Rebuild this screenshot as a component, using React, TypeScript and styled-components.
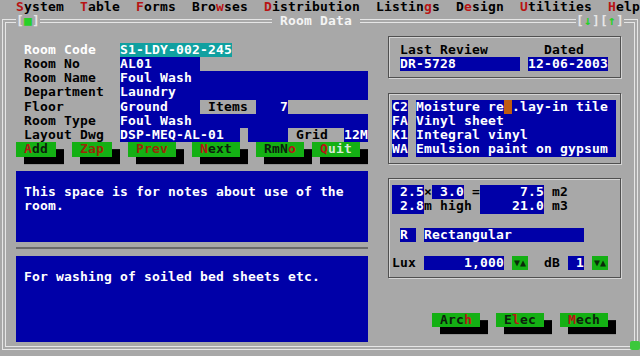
import React from 'react';
import styled, { createGlobalStyle } from 'styled-components';

// text-mode screen: 80 x 25 cells
const CW = 8;
const RH = 356 / 25;

const GRAY = '#a8a8a8';
const BLUE = '#0000a8';
const CYAN = '#10a0a0';
const GREEN = '#14b014';
const RED = '#b81414';

const GlobalStyle = createGlobalStyle`
  html, body {
    margin: 0;
    padding: 0;
    background: ${GRAY};
  }
`;

const Screen = styled.div`
  position: relative;
  width: 640px;
  height: 356px;
  overflow: hidden;
  background: ${GRAY};
  color: #000;
  font-family: "DejaVu Sans Mono", "Liberation Mono", monospace;
  font-weight: bold;
  font-size: 13px;
  letter-spacing: 0.17px;
  line-height: ${RH}px;
  white-space: pre;
`;

const MenuBar = styled.div`
  display: flex;
  gap: 16px;
  height: ${RH}px;
  padding-left: 16px;
`;

const Hot = styled.span<{ $color?: string }>`
  color: ${(p) => p.$color ?? RED};
`;

const Window = styled.div`
  position: relative;
  box-sizing: border-box;
  height: 331px;
  margin: 4.76px 2px 0;
  border: 4px double #e6e6e6;
`;

const TitleBar = styled.div`
  display: flex;
  height: ${RH}px;
  margin-top: -8.76px;
  padding: 0 10px;
`;

const TitleGlyphs = styled.span`
  background: ${GRAY};
  color: #e6e6e6;
`;

const TitleText = styled.span`
  margin-left: 232px;
  background: ${GRAY};
  color: #f4f4f4;
`;

const Spacer = styled.span`
  flex: 1;
`;

const GreenGlyph = styled.span`
  color: #28d028;
`;

const Grip = styled.div`
  position: absolute;
  right: -6px;
  bottom: -4px;
  width: 10px;
  height: 9px;
  border-radius: 2px;
  background: #3cc83c;
`;

const Body = styled.div`
  display: flex;
  gap: 16px;
  padding-left: 10px;
`;

const LeftCol = styled.div`
  display: flex;
  flex-direction: column;
  width: 352px;
  padding-top: ${RH}px;
`;

const RightCol = styled.div`
  display: flex;
  flex-direction: column;
  width: 240px;
`;

const Row = styled.div`
  display: flex;
  height: ${RH}px;
`;

const Label = styled.span<{ $active?: boolean }>`
  box-sizing: border-box;
  width: 104px;
  padding-left: 8px;
  color: ${(p) => (p.$active ? '#ffffff' : '#000000')};
`;

const Field = styled.span<{ $w: number; $bg?: string }>`
  flex-shrink: 0;
  width: ${(p) => p.$w * CW}px;
  overflow: hidden;
  background: ${(p) => p.$bg ?? BLUE};
  color: #ffffff;
`;

const Gap = styled.span<{ $w: number }>`
  flex-shrink: 0;
  width: ${(p) => p.$w * CW}px;
`;

const Txt = styled.span`
  color: #000;
`;

const Cursor = styled.span`
  background: #c05c10;
`;

const Spinner = styled.span`
  width: 16px;
  background: ${GREEN};
  color: #0a2a0a;
  font-size: 10px;
  letter-spacing: 0;
  text-align: center;
`;

const ButtonRow = styled.div<{ $top?: number }>`
  display: flex;
  height: ${RH}px;
  margin-top: ${(p) => (p.$top ?? 0) * RH}px;
`;

const Button = styled.span<{ $at: number; $ink?: string }>`
  margin-left: ${(p) => p.$at * CW}px;
  background: ${GREEN};
  color: ${(p) => p.$ink ?? '#0c200c'};
  box-shadow: 8px ${RH / 2}px 0 #000;
`;

const Notes = styled.div<{ $rows: number; $top?: number }>`
  box-sizing: border-box;
  height: ${(p) => p.$rows * RH}px;
  margin-top: ${(p) => (p.$top ?? 0) * RH}px;
  padding: ${RH}px 8px 0;
  background: ${BLUE};
  color: #ffffff;
`;

const Separator = styled.div`
  height: ${RH}px;
  &::after {
    content: '';
    display: block;
    height: 2px;
    margin-top: 5px;
    background: #6a6a6a;
  }
`;

const Box = styled.div<{ $rows: number }>`
  box-sizing: border-box;
  width: 233px;
  height: ${(p) => p.$rows * RH}px;
  margin: ${RH / 2}px 0 ${RH / 2}px 4px;
  padding: ${RH / 2 - 1}px 0 0 3px;
  border: 1px solid #505050;
  box-shadow: inset 1px 1px 0 #d4d4d4, 1px 1px 0 #d4d4d4;
`;

const hot = (text: string, i: number, color?: string) => (
  <>
    {text.slice(0, i)}
    <Hot $color={color}>{text[i]}</Hot>
    {text.slice(i + 1)}
  </>
);

const menu: [string, number][] = [
  ['System', 0],
  ['Table', 0],
  ['Forms', 0],
  ['Browses', 3],
  ['Distribution', 0],
  ['Listings', 6],
  ['Design', 1],
  ['Utilities', 0],
  ['Help', 0],
];

const materials: [string, React.ReactNode][] = [
  ['C2', <>Moisture re<Cursor> </Cursor>.lay-in tile</>],
  ['FA', 'Vinyl sheet'],
  ['K1', 'Integral vinyl'],
  ['WA', 'Emulsion paint on gypsum'],
];

export default function App() {
  return (
    <Screen>
      <GlobalStyle />
      <MenuBar>
        {menu.map(([m, i]) => (
          <span key={m}>{hot(m, i)}</span>
        ))}
      </MenuBar>

      <Window>
        <TitleBar>
          <TitleGlyphs>[<GreenGlyph>■</GreenGlyph>]</TitleGlyphs>
          <TitleText> Room Data </TitleText>
          <Spacer />
          <TitleGlyphs>
            [<GreenGlyph>↓</GreenGlyph>][<GreenGlyph>↑</GreenGlyph>]
          </TitleGlyphs>
        </TitleBar>

        <Body>
          <LeftCol>
            <Row>
              <Label $active>Room Code</Label>
              <Field $w={14} $bg={CYAN}>S1-LDY-002-245</Field>
            </Row>
            <Row>
              <Label>Room No</Label>
              <Field $w={10}>AL01</Field>
            </Row>
            <Row>
              <Label>Room Name</Label>
              <Field $w={31}>Foul Wash</Field>
            </Row>
            <Row>
              <Label>Department</Label>
              <Field $w={31}>Laundry</Field>
            </Row>
            <Row>
              <Label>Floor</Label>
              <Field $w={10}>Ground</Field>
              <Gap $w={7}> Items</Gap>
              <Field $w={4}>   7</Field>
            </Row>
            <Row>
              <Label>Room Type</Label>
              <Field $w={31}>Foul Wash</Field>
            </Row>
            <Row>
              <Label>Layout Dwg</Label>
              <Field $w={15}>DSP-MEQ-AL-01</Field>
              <Gap $w={1} />
              <Field $w={5} />
              <Gap $w={7}> Grid</Gap>
              <Field $w={3}>12M</Field>
            </Row>

            <ButtonRow>
              <Button $at={0}> {hot('Add', 0)} </Button>
              <Button $at={2} $ink="#9a2a08"> Zap </Button>
              <Button $at={2} $ink="#9a2a08"> Prev </Button>
              <Button $at={2}> {hot('Next', 0)} </Button>
              <Button $at={2}> {hot('RmNo', 3)} </Button>
              <Button $at={1} $ink="#d8e8d8"> {hot('Quit', 0)} </Button>
            </ButtonRow>

            <Notes $rows={5} $top={1}>
              {'This space is for notes about use of the\nroom.'}
            </Notes>
            <Separator />
            <Notes $rows={6}>For washing of soiled bed sheets etc.</Notes>
          </LeftCol>

          <RightCol>
            <Box $rows={3}>
              <Row>
                <Gap $w={1} />
                <Txt>Last Review</Txt>
                <Gap $w={7} />
                <Txt>Dated</Txt>
              </Row>
              <Row>
                <Gap $w={1} />
                <Field $w={15}>DR-5728</Field>
                <Gap $w={1} />
                <Field $w={10}>12-06-2003</Field>
              </Row>
            </Box>

            <Box $rows={5}>
              {materials.map(([code, desc]) => (
                <Row key={code}>
                  <Field $w={2}>{code}</Field>
                  <Gap $w={1} />
                  <Field $w={25}>{desc}</Field>
                </Row>
              ))}
            </Box>

            <Box $rows={7}>
              <Row>
                <Field $w={4}> 2.5</Field>
                <Txt>×</Txt>
                <Field $w={4}> 3.0</Field>
                <Txt> =</Txt>
                <Field $w={8}>     7.5</Field>
                <Txt> m2</Txt>
              </Row>
              <Row>
                <Field $w={4}> 2.8</Field>
                <Txt>m high </Txt>
                <Field $w={8}>    21.0</Field>
                <Txt> m3</Txt>
              </Row>
              <Row />
              <Row>
                <Gap $w={1} />
                <Field $w={2}>R</Field>
                <Gap $w={1} />
                <Field $w={20}>Rectangular</Field>
              </Row>
              <Row />
              <Row>
                <Txt>Lux </Txt>
                <Field $w={10}>     1,000</Field>
                <Gap $w={1} />
                <Spinner>▼▲</Spinner>
                <Txt>  dB </Txt>
                <Field $w={2}> 1</Field>
                <Gap $w={1} />
                <Spinner>▼▲</Spinner>
              </Row>
            </Box>

            <ButtonRow $top={2}>
              <Button $at={6}> {hot('Arch', 3)} </Button>
              <Button $at={2}> {hot('Elec', 1)} </Button>
              <Button $at={2}> {hot('Mech', 0)} </Button>
            </ButtonRow>
          </RightCol>
        </Body>
        <Grip />
      </Window>
    </Screen>
  );
}
